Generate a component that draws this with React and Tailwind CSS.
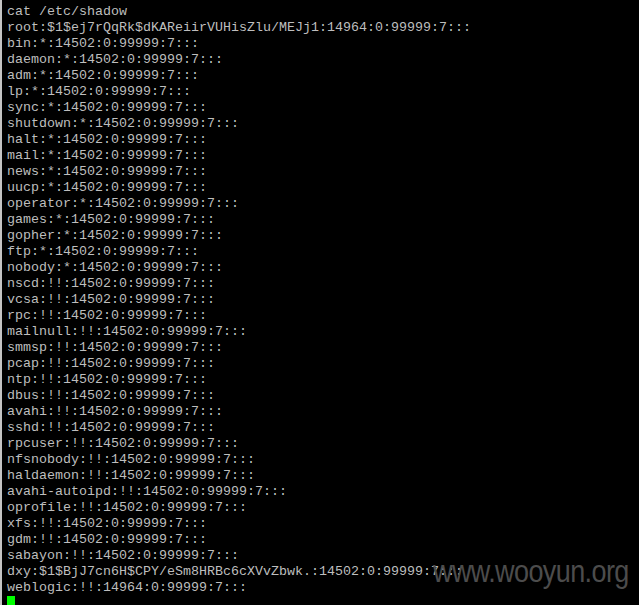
const lines = [
  "cat /etc/shadow",
  "root:$1$ej7rQqRk$dKAReiirVUHisZlu/MEJj1:14964:0:99999:7:::",
  "bin:*:14502:0:99999:7:::",
  "daemon:*:14502:0:99999:7:::",
  "adm:*:14502:0:99999:7:::",
  "lp:*:14502:0:99999:7:::",
  "sync:*:14502:0:99999:7:::",
  "shutdown:*:14502:0:99999:7:::",
  "halt:*:14502:0:99999:7:::",
  "mail:*:14502:0:99999:7:::",
  "news:*:14502:0:99999:7:::",
  "uucp:*:14502:0:99999:7:::",
  "operator:*:14502:0:99999:7:::",
  "games:*:14502:0:99999:7:::",
  "gopher:*:14502:0:99999:7:::",
  "ftp:*:14502:0:99999:7:::",
  "nobody:*:14502:0:99999:7:::",
  "nscd:!!:14502:0:99999:7:::",
  "vcsa:!!:14502:0:99999:7:::",
  "rpc:!!:14502:0:99999:7:::",
  "mailnull:!!:14502:0:99999:7:::",
  "smmsp:!!:14502:0:99999:7:::",
  "pcap:!!:14502:0:99999:7:::",
  "ntp:!!:14502:0:99999:7:::",
  "dbus:!!:14502:0:99999:7:::",
  "avahi:!!:14502:0:99999:7:::",
  "sshd:!!:14502:0:99999:7:::",
  "rpcuser:!!:14502:0:99999:7:::",
  "nfsnobody:!!:14502:0:99999:7:::",
  "haldaemon:!!:14502:0:99999:7:::",
  "avahi-autoipd:!!:14502:0:99999:7:::",
  "oprofile:!!:14502:0:99999:7:::",
  "xfs:!!:14502:0:99999:7:::",
  "gdm:!!:14502:0:99999:7:::",
  "sabayon:!!:14502:0:99999:7:::",
  "dxy:$1$BjJ7cn6H$CPY/eSm8HRBc6cXVvZbwk.:14502:0:99999:7:::",
  "weblogic:!!:14964:0:99999:7:::",
];

export default function App() {
  return (
    <div className="relative w-[639px] h-[605px] overflow-hidden bg-black border-l-2 border-[#c4c4c4]">
      <div
        className="pt-[4px] pl-[5px] text-[13.33px] leading-[16px] text-[#bebebe] whitespace-pre"
        style={{ fontFamily: '"Liberation Mono", "Courier New", monospace' }}
      >
        {lines.map((l, i) => (
          <div key={i} className="h-[16px]">{l}</div>
        ))}
        <div className="h-[16px] flex items-start">
          <div className="w-[8px] h-[10px] bg-[#00ff00]" />
        </div>
      </div>
      <div
        className="absolute left-[431px] top-[559px] text-[27px] leading-[30px] tracking-[-0.6px] text-[#4c4c4c] whitespace-nowrap scale-y-[1.15] origin-bottom"
        style={{ fontFamily: '"Liberation Sans", Arial, sans-serif' }}
      >
        www.wooyun.org
      </div>
    </div>
  );
}
